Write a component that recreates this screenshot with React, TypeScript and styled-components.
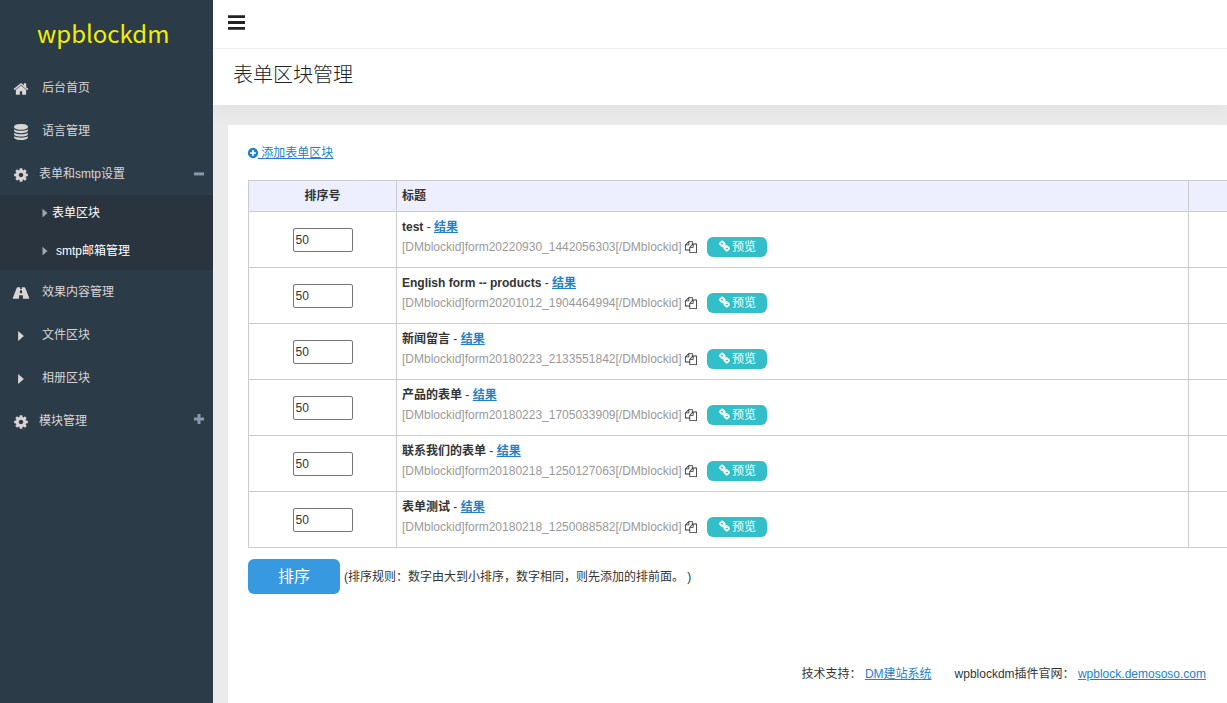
import React from "react";
import styled, { createGlobalStyle } from "styled-components";

const GlobalStyle = createGlobalStyle`
  * { box-sizing: border-box; }
  body {
    margin: 0;
    background: #ebebeb;
    color: #333;
    font: 12px/20px "Liberation Sans", "Noto Sans CJK SC", sans-serif;
    overflow-x: hidden;
  }
  a { color: #2480c8; text-decoration: underline; }
`;

const icons = {
  home: "M1472 992v480q0 26-19 45t-45 19h-384v-384h-256v384h-384q-26 0-45-19t-19-45v-480q0-1 .5-3t.5-3l575-474 575 474q1 2 1 6zm223-69l-62 74q-8 9-21 11h-3q-13 0-21-7l-692-577-692 577q-12 8-24 7-13-2-21-11l-62-74q-8-10-7-23.5t11-21.5l719-599q32-26 76-26t76 26l244 204v-195q0-14 9-23t23-9h192q14 0 23 9t9 23v408l219 182q10 8 11 21.5t-7 23.5z",
  database:
    "M896 768q237 0 443-43t325-127v170q0 69-103 128t-280 93.5-385 34.5-385-34.5-280-93.5-103-128v-170q119 84 325 127t443 43zm0 768q237 0 443-43t325-127v170q0 69-103 128t-280 93.5-385 34.5-385-34.5-280-93.5-103-128v-170q119 84 325 127t443 43zm0-384q237 0 443-43t325-127v170q0 69-103 128t-280 93.5-385 34.5-385-34.5-280-93.5-103-128v-170q119 84 325 127t443 43zm0-1152q208 0 385 34.5t280 93.5 103 128v128q0 69-103 128t-280 93.5-385 34.5-385-34.5-280-93.5-103-128v-128q0-69 103-128t280-93.5 385-34.5z",
  cog: "M1152 896q0-106-75-181t-181-75-181 75-75 181 75 181 181 75 181-75 75-181zm512-109v222q0 12-8 23t-20 13l-185 28q-19 54-39 91 35 50 107 138 10 12 10 25t-9 23q-27 37-99 108t-94 71q-12 0-26-9l-138-108q-44 23-91 38-16 136-29 186-7 28-36 28h-222q-14 0-24.5-8.5t-11.5-21.5l-28-184q-49-16-90-37l-141 107q-10 9-25 9-14 0-25-11-126-114-165-168-7-10-7-23 0-12 8-23 15-21 51-66.5t54-70.5q-27-50-41-99l-183-27q-13-2-21-12.5t-8-23.5v-222q0-12 8-23t19-13l186-28q14-46 39-92-40-57-107-138-10-12-10-24 0-10 9-23 26-36 98.5-107.5t94.5-71.5q13 0 26 10l138 107q44-23 91-38 16-136 29-186 7-28 36-28h222q14 0 24.5 8.5t11.5 21.5l28 184q49 16 90 37l142-107q9-9 24-9 13 0 25 10 129 119 165 170 7 8 7 22 0 12-8 23-15 21-51 66.5t-54 70.5q26 50 41 98l183 28q13 2 21 12.5t8 23.5z",
  road: "M500 256h310l-12 190h196l-12-190h310q50 0 75 60l450 1130q25 90-60 90h-630l-28-390h-406l-28 390h-630q-85 0-60-90l450-1130q25-60 75-60zM790 590l-24 330h260l-24-330z",
  caret: "M576 336l640 560-640 560z",
  plusCircle:
    "M1344 960v-128q0-26-19-45t-45-19h-256v-256q0-26-19-45t-45-19h-128q-26 0-45 19t-19 45v256h-256q-26 0-45 19t-19 45v128q0 26 19 45t45 19h256v256q0 26 19 45t45 19h128q26 0 45-19t19-45v-256h256q26 0 45-19t19-45zm320-64q0 209-103 385.5t-279.5 279.5-385.5 103-385.5-103-279.5-279.5-103-385.5 103-385.5 279.5-279.5 385.5-103 385.5 103 279.5 279.5 103 385.5z",
  copy: "M1696 384q40 0 68 28t28 68v1216q0 40-28 68t-68 28h-960q-40 0-68-28t-28-68v-288h-544q-40 0-68-28t-28-68v-672q0-40 20-88t48-76l408-408q28-28 76-48t88-20h416q40 0 68 28t28 68v328q68-40 128-40h416zm-544 213l-299 299h299v-299zm-640-384l-299 299h299v-299zm196 647l316-316v-416h-384v416q0 40-28 68t-68 28h-416v640h512v-256q0-40 20-88t48-76zm956 804v-1152h-384v416q0 40-28 68t-68 28h-416v640h896z",
  link: "M1520 1216q0-40-28-68l-208-208q-28-28-68-28-42 0-72 32 3 3 19 18.5t21.5 21.5 15 19 13 25.5 3.5 27.5q0 40-28 68t-68 28q-15 0-27.5-3.5t-25.5-13-19-15-21.5-21.5-18.5-19q-33 31-33 73 0 40 28 68l206 207q27 27 68 27 40 0 68-26l147-146q28-28 28-67zm-703-705q0-40-28-68l-206-207q-28-28-68-28-39 0-68 27l-147 146q-28 28-28 67 0 40 28 68l208 208q27 27 68 27 42 0 72-31-3-3-19-18.5t-21.5-21.5-15-19-13-25.5-3.5-27.5q0-40 28-68t68-28q15 0 27.5 3.5t25.5 13 19 15 21.5 21.5 18.5 19q33-31 33-73zm895 705q0 120-85 203l-147 146q-83 83-203 83-121 0-204-85l-206-207q-83-83-83-203 0-123 88-209l-88-88q-86 88-208 88-120 0-204-84l-208-208q-84-84-84-204t85-203l147-146q83-83 203-83 121 0 204 85l206 207q83 83 83 203 0 123-88 209l88 88q86-88 208-88 120 0 204 84l208 208q84 84 84 204z",
  minus: "M0 970h1792v540h-1792z",
  plus: "M630 0h532v630h630v532h-630v630h-532v-630h-630v-532h630z",
  bars: "M0 128h1792v300h-1792zM0 746h1792v300h-1792zM0 1364h1792v300h-1792z",
};
type IconName = keyof typeof icons;

function Icon({ name, size, stroke = 0 }: { name: IconName; size: number; stroke?: number }) {
  return (
    <svg
      width={size}
      height={size}
      viewBox="0 0 1792 1792"
      fill="currentColor"
      fillRule="evenodd"
      stroke={stroke ? "currentColor" : "none"}
      strokeWidth={stroke}
      overflow="visible"
      aria-hidden="true"
    >
      <path d={icons[name]} />
    </svg>
  );
}

const Shell = styled.div`
  display: flex;
  min-height: 100vh;
`;

const Sidebar = styled.aside`
  position: relative;
  z-index: 1;
  flex: 0 0 213px;
  background: #2c3b48;
`;

const Logo = styled.div`
  height: 66px;
  padding-left: 37px;
  color: #f0f000;
  font: 24px/66px "Noto Sans CJK SC", sans-serif;
`;

const Menu = styled.ul`
  margin: 0;
  padding: 0;
  list-style: none;
`;

const MenuLink = styled.a<{ $tight?: boolean }>`
  display: flex;
  align-items: center;
  gap: ${(p) => (p.$tight ? 10 : 13)}px;
  height: 43px;
  padding: 0 9px 0 13px;
  color: #d9d5d5;
  text-decoration: none;
`;

const MenuIcon = styled.span`
  display: flex;
  padding-top: 3px;
`;

const Toggle = styled.span`
  display: flex;
  margin-left: auto;
  padding-bottom: 4px;
  color: #8a99ab;
`;

const SubMenu = styled(Menu)`
  display: grid;
  gap: 2px;
  padding-bottom: 1px;
  background: #29343f;
`;

const SubLink = styled.a<{ $wide?: boolean }>`
  display: flex;
  align-items: center;
  gap: ${(p) => (p.$wide ? 4 : 0)}px;
  height: 36px;
  padding-left: 38px;
  color: #fff;
  text-decoration: none;

  svg { color: #a0a6ac; }
`;

const Main = styled.div`
  flex: 1;
  min-width: 0;
  display: flex;
  flex-direction: column;
`;

const TopBar = styled.header`
  position: relative;
  z-index: 1;
  height: 49px;
  padding: 14px 15px;
  background: #fff;
  border-bottom: 1px solid #eee;
`;

const BarsButton = styled.button`
  display: block;
  padding: 0;
  border: 0;
  background: none;
  color: #222;
`;

const TitleBar = styled.div`
  height: 56px;
  padding: 0 20px;
  background: #fff;
  box-shadow: 0 4px 24px rgba(0, 0, 0, 0.06);
`;

const Title = styled.h1`
  margin: 0;
  color: #222;
  font-size: 20px;
  font-weight: 300;
  line-height: 52px;
`;

const Card = styled.main`
  position: relative;
  flex: 1;
  display: flex;
  flex-direction: column;
  margin: 20px 0 0 15px;
  padding: 18px 0 0 20px;
  background: #fff;
`;

const AddLink = styled.a`
  align-self: flex-start;
  margin-bottom: 17px;

  svg {
    margin: 0 -1px;
    vertical-align: -2px;
  }
`;

const Table = styled.table`
  width: 100%;
  table-layout: fixed;
  border-collapse: collapse;
  border: 1px solid #ccc;
  border-right: 0;
`;

const Th = styled.th<{ $width?: number; $center?: boolean }>`
  width: ${(p) => (p.$width ? `${p.$width}px` : "auto")};
  height: 31px;
  padding: 0 5px;
  border: 1px solid #ccc;
  border-right: 0;
  background: #edefff;
  text-align: ${(p) => (p.$center ? "center" : "left")};
`;

const Td = styled.td<{ $center?: boolean }>`
  height: 56px;
  padding: ${(p) => (p.$center ? "0 5px" : "0 5px 6px")};
  border: 1px solid #ccc;
  border-right: 0;
  text-align: ${(p) => (p.$center ? "center" : "left")};
`;

const OrderInput = styled.input`
  display: inline-block;
  width: 60px;
  height: 24px;
  padding: 1px 2px;
  border: 1px solid #767676;
  border-radius: 2px;
  color: #333;
  font: inherit;
  vertical-align: middle;
`;

const FormName = styled.div`
  height: 20px;
`;

const CodeLine = styled.div`
  display: flex;
  align-items: center;
  height: 20px;
  color: #999;
`;

const CopyButton = styled.button`
  display: flex;
  margin: 0 10px 0 3px;
  padding: 0;
  border: 0;
  background: none;
  color: #333;
`;

const Preview = styled.a`
  display: flex;
  align-items: center;
  justify-content: center;
  gap: 2px;
  width: 60px;
  height: 20px;
  padding-left: 2px;
  border-radius: 6px;
  background: #32bfca;
  color: #fff;
  text-decoration: none;
`;

const SortRow = styled.div`
  display: flex;
  align-items: center;
  gap: 4px;
  margin-top: 11px;
`;

const SortButton = styled.button`
  width: 92px;
  height: 35px;
  padding: 0;
  border: 0;
  border-radius: 6px;
  background: #3799df;
  color: #fff;
  font: 16px/20px "Liberation Sans", "Noto Sans CJK SC", sans-serif;
`;

const Footer = styled.footer`
  display: flex;
  justify-content: flex-end;
  gap: 23px;
  margin-top: auto;
  padding: 0 21px 19px 0;
`;

const menuTop: { icon: IconName; label: string; tight?: boolean; toggle?: IconName }[] = [
  { icon: "home", label: "后台首页" },
  { icon: "database", label: "语言管理" },
  { icon: "cog", label: "表单和smtp设置", tight: true, toggle: "minus" },
];
const menuBottom: typeof menuTop = [
  { icon: "road", label: "效果内容管理" },
  { icon: "caret", label: "文件区块" },
  { icon: "caret", label: "相册区块" },
  { icon: "cog", label: "模块管理", tight: true, toggle: "plus" },
];

const forms = [
  { name: "test", id: "form20220930_1442056303" },
  { name: "English form -- products", id: "form20201012_1904464994" },
  { name: "新闻留言", id: "form20180223_2133551842" },
  { name: "产品的表单", id: "form20180223_1705033909" },
  { name: "联系我们的表单", id: "form20180218_1250127063" },
  { name: "表单测试", id: "form20180218_1250088582" },
];

function MenuItem({ icon, label, tight, toggle }: (typeof menuTop)[number]) {
  return (
    <MenuLink href="#" $tight={tight}>
      <MenuIcon>
        <Icon name={icon} size={16} />
      </MenuIcon>
      {label}
      {toggle && (
        <Toggle>
          <Icon name={toggle} size={10} />
        </Toggle>
      )}
    </MenuLink>
  );
}

export default function App() {
  return (
    <>
      <GlobalStyle />
      <Shell>
        <Sidebar>
          <Logo>wpblockdm</Logo>
          <nav>
            <Menu>
              {menuTop.map((item) => (
                <li key={item.label}>
                  <MenuItem {...item} />
                  {item.toggle && (
                    <SubMenu>
                      <li>
                        <SubLink href="#">
                          <Icon name="caret" size={14} />
                          表单区块
                        </SubLink>
                      </li>
                      <li>
                        <SubLink href="#" $wide>
                          <Icon name="caret" size={14} />
                          smtp邮箱管理
                        </SubLink>
                      </li>
                    </SubMenu>
                  )}
                </li>
              ))}
              {menuBottom.map((item) => (
                <li key={item.label}>
                  <MenuItem {...item} />
                </li>
              ))}
            </Menu>
          </nav>
        </Sidebar>
        <Main>
          <TopBar>
            <BarsButton type="button" aria-label="菜单">
              <Icon name="bars" size={17} />
            </BarsButton>
          </TopBar>
          <TitleBar>
            <Title>表单区块管理</Title>
          </TitleBar>
          <Card>
            <AddLink href="#">
              <Icon name="plusCircle" size={12} /> 添加表单区块
            </AddLink>
            <Table>
              <thead>
                <tr>
                  <Th $width={148} $center>排序号</Th>
                  <Th>标题</Th>
                  <Th $width={39} />
                </tr>
              </thead>
              <tbody>
                {forms.map((form) => (
                  <tr key={form.id}>
                    <Td $center>
                      <OrderInput type="text" defaultValue="50" aria-label={`${form.name} 排序号`} />
                    </Td>
                    <Td>
                      <FormName>
                        <strong>{form.name}</strong> - <a href="#"><strong>结果</strong></a>
                      </FormName>
                      <CodeLine>
                        [DMblockid]{form.id}[/DMblockid]
                        <CopyButton type="button" aria-label="复制">
                          <Icon name="copy" size={12} />
                        </CopyButton>
                        <Preview href="#">
                          <Icon name="link" size={11} stroke={130} />
                          预览
                        </Preview>
                      </CodeLine>
                    </Td>
                    <Td />
                  </tr>
                ))}
              </tbody>
            </Table>
            <SortRow>
              <SortButton type="submit">排序</SortButton>
              <span>(排序规则：数字由大到小排序，数字相同，则先添加的排前面。 )</span>
            </SortRow>
            <Footer>
              <span>
                技术支持： <a href="#">DM建站系统</a>
              </span>
              <span>
                wpblockdm插件官网： <a href="#">wpblock.demososo.com</a>
              </span>
            </Footer>
          </Card>
        </Main>
      </Shell>
    </>
  );
}
